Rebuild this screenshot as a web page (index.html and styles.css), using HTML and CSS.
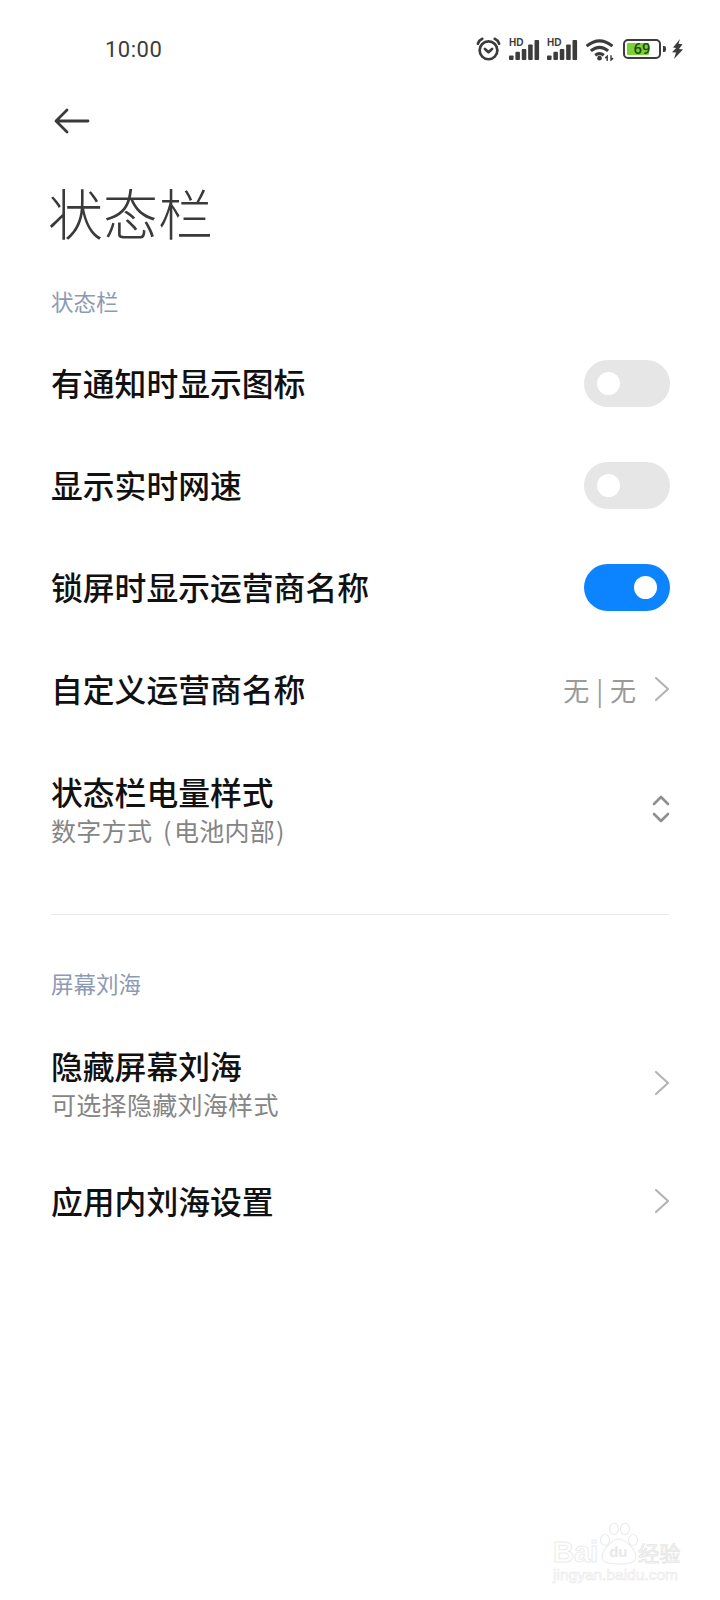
FILE: index.html
```html
<!DOCTYPE html>
<html lang="zh">
<head>
<meta charset="utf-8">
<title>状态栏</title>
<link rel="stylesheet" href="styles.css">
</head>
<body>
<div class="page">
  <header class="status">
    <span class="time">10:00</span>
    <div class="status-icons">
      <svg class="ic-alarm" width="25" height="24" viewBox="0 0 28 27" fill="none" stroke="#3c3c3c" stroke-width="3" stroke-linecap="round" stroke-linejoin="round"><circle cx="14" cy="15" r="10"/><path d="M10 13.500l4 3.600 4-3.600"/><path d="M2 7.500Q3.500 3.500 7 2M26 7.500Q24.500 3.500 21 2"/></svg>
      <svg class="ic-signal" width="31" height="22" viewBox="0 0 34 24" fill="#3c3c3c"><text x="0" y="9" class="hd">HD</text><rect x="0" y="19" width="5" height="5" rx="1"/><rect x="7" y="15" width="5" height="9" rx="1"/><rect x="14" y="12" width="5" height="12" rx="1"/><rect x="21" y="7" width="5" height="17" rx="1"/><rect x="28" y="2" width="5" height="22" rx="1"/></svg>
      <svg class="ic-signal" width="31" height="22" viewBox="0 0 34 24" fill="#3c3c3c"><text x="0" y="9" class="hd">HD</text><rect x="0" y="19" width="5" height="5" rx="1"/><rect x="7" y="15" width="5" height="9" rx="1"/><rect x="14" y="12" width="5" height="12" rx="1"/><rect x="21" y="7" width="5" height="17" rx="1"/><rect x="28" y="2" width="5" height="22" rx="1"/></svg>
      <svg class="ic-wifi" width="30" height="23" viewBox="0 0 31 24" fill="none" stroke="#3c3c3c" stroke-width="3.200"><path d="M1.500 8.500Q15-2.500 28.500 8.500"/><path d="M6 13.500Q15 6 24 13.500"/><path d="M10.500 18Q15 14.500 19.500 18"/><circle cx="15" cy="21" r="2.400" fill="#3c3c3c" stroke="none"/><path d="M23 24v-5l-2 2M27 18v5l2-2" stroke-width="1.500"/></svg>
      <div class="battery">
        <div class="batt-body"><div class="batt-fill"></div><span class="batt-num">69</span></div>
        <div class="batt-tip"></div>
      </div>
      <svg class="ic-bolt" width="11" height="20" viewBox="0 0 11 19" preserveAspectRatio="none" fill="#3c3c3c"><path d="M8 0L1 8l3.200.600L0 12.500l4 .400L2 19l9-9-4-.600 3.500-4.400-4-.500z"/></svg>
    </div>
  </header>

  <nav class="nav">
    <svg width="36" height="26" viewBox="0 0 36 26" fill="none" stroke="#3a3a3a" stroke-width="2.800" stroke-linecap="round" stroke-linejoin="round"><path d="M34 13H2M13 2L2 13l11 11"/></svg>
  </nav>

  <h1 class="title">状态栏</h1>

  <section class="group">
    <h2 class="group-label">状态栏</h2>
    <div class="row row-plain">
      <span class="row-title">有通知时显示图标</span>
      <span class="switch"><span class="knob"></span></span>
    </div>
    <div class="row row-plain">
      <span class="row-title">显示实时网速</span>
      <span class="switch"><span class="knob"></span></span>
    </div>
    <div class="row row-plain">
      <span class="row-title">锁屏时显示运营商名称</span>
      <span class="switch switch-on"><span class="knob"></span></span>
    </div>
    <div class="row row-plain">
      <span class="row-title">自定义运营商名称</span>
      <span class="row-end">
        <span class="row-value">无 | 无</span>
        <svg class="chev" width="16" height="26" viewBox="0 0 16 26" fill="none" stroke="#b4b4b4" stroke-width="2.200" stroke-linecap="round" stroke-linejoin="round"><path d="M2 2l12 11L2 24"/></svg>
      </span>
    </div>
    <div class="row row-double row-battery">
      <span class="row-text">
        <span class="row-title">状态栏电量样式</span>
        <span class="row-sub">数字方式 <span class="paren-l">(</span>电池内部<span class="paren-r">)</span></span>
      </span>
      <svg class="updown" width="18" height="30" viewBox="0 0 18 30" fill="none" stroke="#8f8f8f" stroke-width="2.600" stroke-linecap="round" stroke-linejoin="round"><path d="M2 10l7-7 7 7M2 20l7 7 7-7"/></svg>
    </div>
  </section>

  <div class="divider"></div>

  <section class="group group-notch">
    <h2 class="group-label">屏幕刘海</h2>
    <div class="row row-double">
      <span class="row-text">
        <span class="row-title">隐藏屏幕刘海</span>
        <span class="row-sub">可选择隐藏刘海样式</span>
      </span>
      <svg class="chev" width="16" height="26" viewBox="0 0 16 26" fill="none" stroke="#b4b4b4" stroke-width="2.200" stroke-linecap="round" stroke-linejoin="round"><path d="M2 2l12 11L2 24"/></svg>
    </div>
    <div class="row row-plain row-last">
      <span class="row-title">应用内刘海设置</span>
      <svg class="chev" width="16" height="26" viewBox="0 0 16 26" fill="none" stroke="#b4b4b4" stroke-width="2.200" stroke-linecap="round" stroke-linejoin="round"><path d="M2 2l12 11L2 24"/></svg>
    </div>
  </section>

  <div class="watermark">
    <div class="wm-top">
      <span class="wm-bai">Bai</span>
      <span class="wm-paw">
        <svg width="38" height="42" viewBox="0 0 38 42" fill="#fff" stroke="#ececec" stroke-width="1.200"><ellipse cx="5" cy="17" rx="4.500" ry="5.500"/><ellipse cx="14" cy="6" rx="4.500" ry="5.500"/><ellipse cx="25" cy="6" rx="4.500" ry="5.500"/><ellipse cx="33" cy="17" rx="4.500" ry="5.500"/><path d="M19 16C12 16 2 27 2 34c0 5 6 7 17 7s17-2 17-7c0-7-10-18-17-18z"/></svg>
        <span class="wm-du">du</span>
      </span>
      <span class="wm-jy">经验</span>
    </div>
    <div class="wm-url">jingyan.baidu.com</div>
  </div>
</div>
</body>
</html>
```
FILE: styles.css
```css
* { box-sizing: border-box; }
html, body { margin: 0; padding: 0; background: #fff; }
body { font-family: "Noto Sans CJK SC", "Noto Sans", sans-serif; color: #000; }
.page { position: relative; width: 720px; height: 1600px; overflow: hidden; padding: 0 51px; background: #fff; }

.status { display: flex; align-items: center; justify-content: space-between; height: 48px; margin-top: 25px; margin-right: -14px; padding-left: 54px; }
.time { font-family: Roboto, sans-serif; font-size: 22px; color: #3c3c3c; letter-spacing: .5px; }
.status-icons { display: flex; align-items: center; }
.ic-alarm { margin-right: 8px; }
.ic-signal { margin-right: 7px; }
.ic-wifi { margin-right: 8px; }
.hd { font-family: "Liberation Sans", sans-serif; font-size: 11px; font-weight: 700; }
.battery { display: flex; align-items: center; margin-right: 6px; }
.batt-body { position: relative; width: 38px; height: 20px; border: 2.500px solid #3c3c3c; border-radius: 5px; padding: 2px; }
.batt-fill { width: 72%; height: 100%; background: #7cd232; border-radius: 1px; }
.batt-num { position: absolute; inset: 0; display: flex; align-items: center; justify-content: center; font-family: Roboto, sans-serif; font-size: 15px; font-weight: 500; color: #1c4a10; }
.batt-tip { width: 3px; height: 6px; margin-left: 2px; background: #3c3c3c; border-radius: 0 2px 2px 0; }

.nav { display: flex; align-items: center; height: 42px; margin-top: 27px; }
.nav svg { display: block; margin-left: 3px; }

.title { margin: 34px 0 0 -3px; font-size: 55px; font-weight: 300; line-height: 70px; color: #3a3a3a; }

.group-label { margin: 0; font-size: 22.500px; font-weight: 400; line-height: 30px; color: #8e9ab5; }
.group { margin-top: 40px; margin-right: -1px; }
.group-notch { margin-top: 53px; }

.row { display: flex; align-items: center; justify-content: space-between; }
.row-plain { height: 102px; }
.group > .group-label + .row-plain { margin-top: 16px; }
.row-title { padding-bottom: 2px; font-size: 31.800px; font-weight: 500; line-height: 40px; color: #111; }
.row-text { display: flex; flex-direction: column; }
.row-sub { margin-top: -1px; font-size: 25px; letter-spacing: .3px; line-height: 36px; color: #858585; }
.paren-l { margin: 0 2px 0 5px; }
.paren-r { margin-left: 1px; }
.row-double { height: 122px; }
.row-battery { height: 108px; padding-top: 30px; margin-bottom: 66px; }
.group-notch .row-double { margin-top: 24px; }
.row-last { height: 114px; }

.row-end { display: flex; align-items: center; gap: 18px; }
.row-value { font-size: 26px; word-spacing: 1px; color: #9a9a9a; }

.switch { display: flex; align-items: center; width: 86px; height: 47px; padding-left: 13px; border-radius: 24px; background: #e6e6e6; }
.knob { width: 23px; height: 23px; border-radius: 50%; background: #fff; }
.switch-on { justify-content: flex-end; padding: 0 13px 0 0; background: #0d84ff; }

.divider { height: 1px; background: #e8e8e8; }

.watermark { position: absolute; left: 553px; top: 1523px; width: 130px; }
.wm-top { display: flex; align-items: flex-end; height: 42px; }
.wm-bai { margin-bottom: -4px; font-family: "Liberation Sans", sans-serif; font-size: 29px; font-weight: 700; line-height: 34px; color: #fff; -webkit-text-stroke: 1px #ececec; }
.wm-paw { position: relative; display: flex; margin-left: 2px; }
.wm-du { position: absolute; left: 9px; bottom: 3px; font-family: "Liberation Sans", sans-serif; font-size: 15px; font-weight: 700; line-height: 20px; color: #e8e8e8; }
.wm-jy { margin-bottom: -2px; font-size: 21px; line-height: 30px; color: #fff; -webkit-text-stroke: 1px #e8e8e8; white-space: nowrap; }
.wm-url { font-family: "Liberation Sans", sans-serif; font-size: 15.500px; line-height: 20px; color: #fff; -webkit-text-stroke: .7px #ebebeb; white-space: nowrap; }
```
